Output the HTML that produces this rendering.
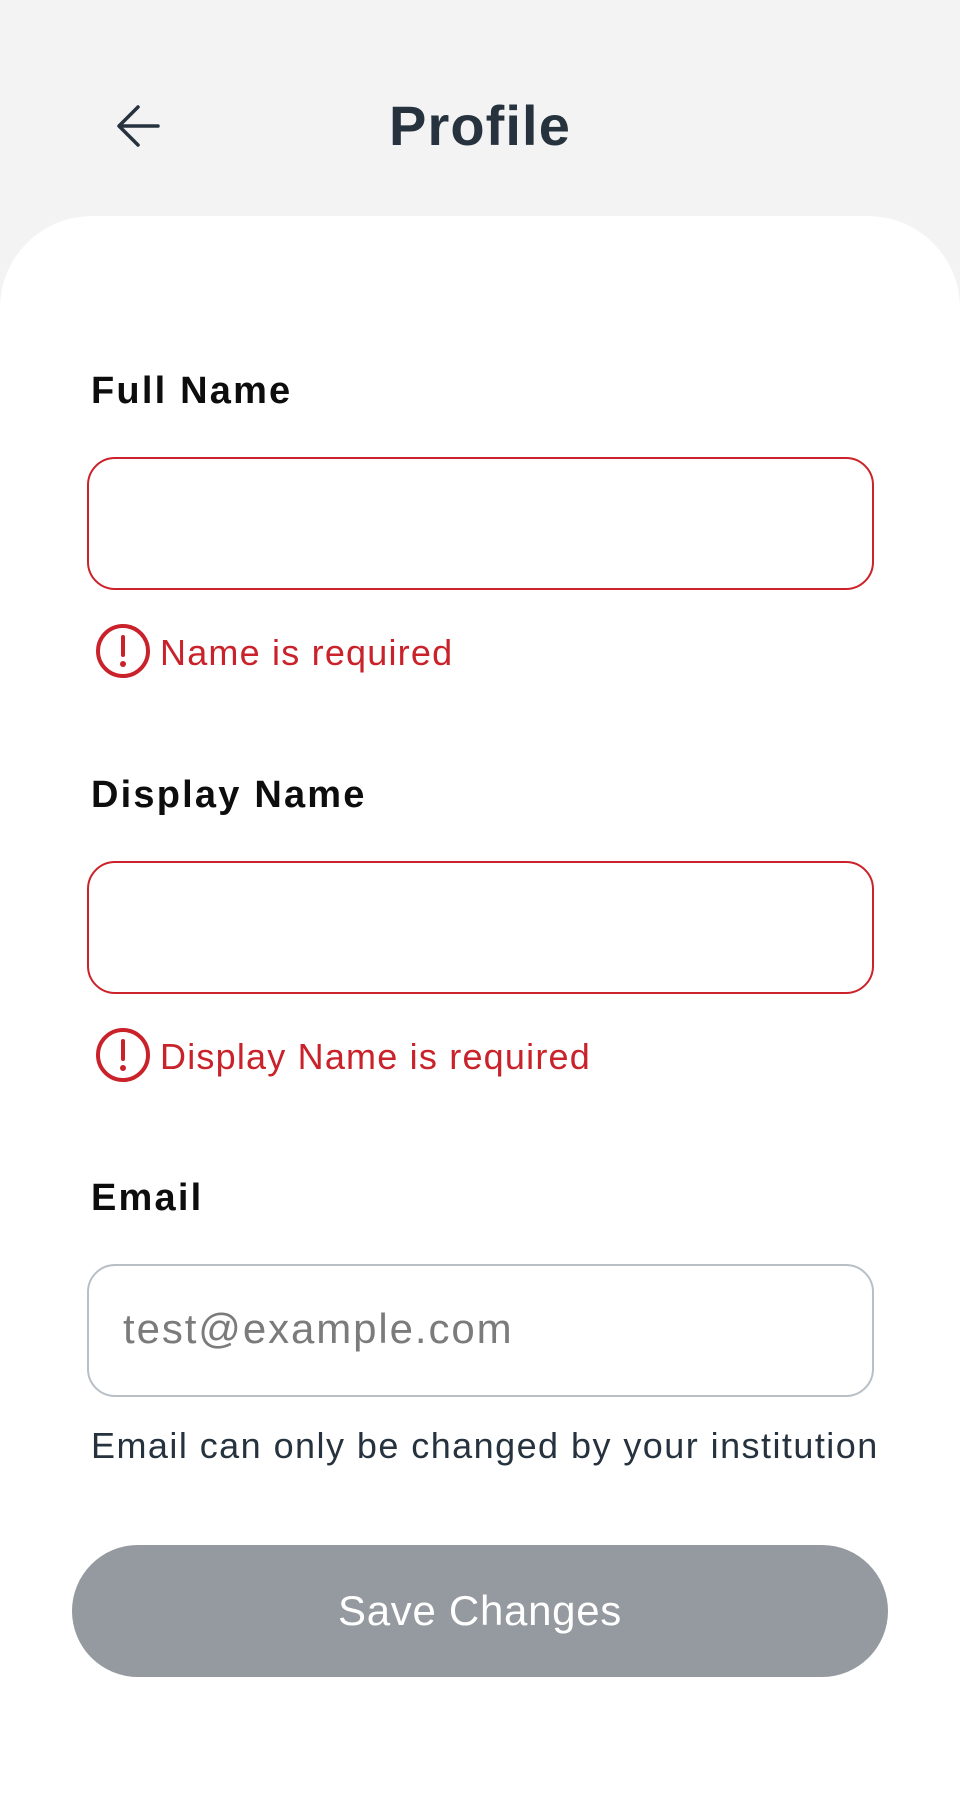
<!DOCTYPE html>
<html><head><meta charset="utf-8"><style>
*{margin:0;padding:0;box-sizing:border-box}
body{width:960px;height:1704px;background:#f2f3f2;position:relative;overflow:hidden;font-family:"Liberation Sans",sans-serif}
.card{position:absolute;left:0;top:216px;width:960px;height:1600px;background:#fff;border-radius:92px 92px 0 0}
.abs{position:absolute;white-space:nowrap}
.lbl{font-size:38px;font-weight:bold;color:#0d0d0d;left:91px;line-height:1;letter-spacing:2.2px}
.inp{position:absolute;left:87px;width:787px;height:133px;border:2.5px solid #cc2229;border-radius:28px}
.err{font-size:36px;color:#c9222a;left:160px;line-height:1;letter-spacing:1.2px}
.ic{position:absolute;left:95px;width:56px;height:56px}
</style></head><body>
<svg class="abs" style="left:114px;top:102px" width="50" height="48" viewBox="0 0 50 48"><path d="M44 24H6M24 5L5 24L24 43" fill="none" stroke="#26333f" stroke-width="3.5" stroke-linecap="round" stroke-linejoin="round"/></svg>
<div class="abs" style="left:389px;top:98px;font-size:56px;font-weight:bold;color:#26333f;line-height:1;letter-spacing:1.1px">Profile</div>
<div class="card"></div>

<div class="abs lbl" style="top:372px">Full Name</div>
<div class="inp" style="top:457px"></div>
<svg class="ic" style="top:623px" viewBox="0 0 56 56"><circle cx="28" cy="28" r="25" fill="none" stroke="#c9222a" stroke-width="4"/><path d="M28 14V32" stroke="#c9222a" stroke-width="4" stroke-linecap="round"/><circle cx="28" cy="41" r="3" fill="#c9222a"/></svg>
<div class="abs err" style="top:635px">Name is required</div>

<div class="abs lbl" style="top:776px">Display Name</div>
<div class="inp" style="top:861px"></div>
<svg class="ic" style="top:1027px" viewBox="0 0 56 56"><circle cx="28" cy="28" r="25" fill="none" stroke="#c9222a" stroke-width="4"/><path d="M28 14V32" stroke="#c9222a" stroke-width="4" stroke-linecap="round"/><circle cx="28" cy="41" r="3" fill="#c9222a"/></svg>
<div class="abs err" style="top:1039px">Display Name is required</div>

<div class="abs lbl" style="top:1179px">Email</div>
<div class="inp" style="top:1264px;border-color:#b8bfc5"></div>
<div class="abs" style="left:123px;top:1308px;font-size:42px;color:#7b7b7b;line-height:1;letter-spacing:1.9px">test@example.com</div>
<div class="abs" style="left:91px;top:1428px;font-size:36px;color:#26333f;line-height:1;letter-spacing:1.45px">Email can only be changed by your institution</div>

<div class="abs" style="left:72px;top:1545px;width:816px;height:132px;border-radius:66px;background:#949a9f"></div>
<div class="abs" style="left:72px;top:1590px;width:816px;text-align:center;font-size:42px;color:#fff;line-height:1;letter-spacing:0.7px">Save Changes</div>
</body></html>
